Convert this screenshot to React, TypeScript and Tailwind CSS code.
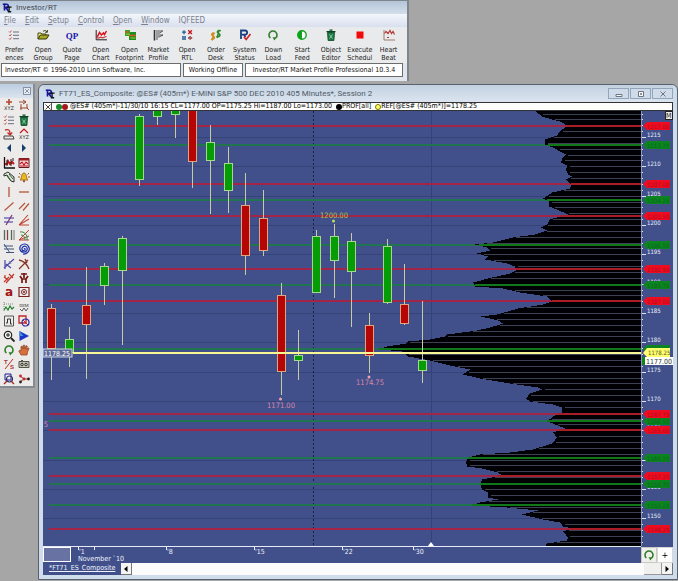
import { clsx } from 'clsx'
import type { ReactNode } from 'react'

const UI_FONT = "font-['DejaVu_Sans_Condensed','DejaVu_Sans','Noto_Sans',sans-serif]"
const TITLE_FONT = "font-['Roboto','Noto_Sans',sans-serif]"

const RED = '#c8141e'
const NAVY = '#1c1c9c'

type Glyph = { name: string; art: ReactNode }

function GlyphSvg({ children, className }: { children: ReactNode; className?: string }) {
  return (
    <svg viewBox="0 0 12 12" fill="none" aria-hidden className={clsx('size-3 flex-none', className)}>
      {children}
    </svg>
  )
}

function Logo() {
  return (
    <svg viewBox="0 0 12 12" fill="none" aria-hidden className="size-[10px] flex-none">
      <path d="M1 1.5h4.5a2 2 0 0 1 0 4H2.5" stroke="#15159c" strokeWidth="2" />
      <path d="M3 1v8M4.5 5l3 4.5" stroke="#15159c" strokeWidth="2" />
      <path d="M5 5h6.5M8.5 4v7M7 10.5h4" stroke="#101018" strokeWidth="1.6" />
    </svg>
  )
}

const refreshArt = (
  <>
    <path d="M3.4 9A4 4 0 1 1 8.6 9" stroke="#2f7d2a" strokeWidth="1.6" />
    <path d="M5.5 8.2h4.2L7.4 11.6z" fill="#2f7d2a" />
  </>
)

const trashArt = (
  <>
    <path d="M2.5 3.5h7l-.6 8H3.1z" fill="#1d7a45" stroke="#0c4526" strokeWidth=".8" />
    <path d="M1.5 2.6h9M4.5 1.2h3" stroke="#0c4526" strokeWidth="1.3" />
    <path d="M4.5 5.5l3 4M7.5 5.5l-3 4" stroke="#a6dcba" strokeWidth=".8" />
  </>
)

const listArt = (
  <>
    <path d="M1 2.5l1 1 1.5-2M1 6l1 1 1.5-2M1 9.5l1 1 1.5-2" stroke="#c04a4a" strokeWidth=".9" />
    <path d="M5 3h6M5 6.3h6M5 9.7h6" stroke="#6e6e86" />
  </>
)

const TOOLBAR: { lines: [string, string]; art: ReactNode }[] = [
  { lines: ['Prefer', 'ences'], art: listArt },
  {
    lines: ['Open', 'Group'],
    art: (
      <>
        <path d="M1 10V4h3l1 1h4v2" stroke="#4b4b10" fill="#f1ef8a" />
        <path d="M1 10l2.4-4H12l-2.6 4z" fill="#a9ab25" stroke="#35350a" />
        <path d="M6 2.4c1.5-1.4 3-1 4 .6M10.4 1v2.3H8.2" stroke="#35350a" strokeWidth=".9" />
      </>
    ),
  },
  {
    lines: ['Quote', 'Page'],
    art: (
      <text x="6" y="10" textAnchor="middle" fontSize="9" fontWeight="700" fill="#1616a8" fontFamily="Liberation Serif, serif">
        QP
      </text>
    ),
  },
  {
    lines: ['Open', 'Chart'],
    art: (
      <>
        <path d="M1.2 1v9.8H12" stroke="#222" />
        <path d="M2 8.500l2.500-5 2 2.500 2-2 1 1.500L11.500 2" stroke="#e0101c" strokeWidth="1.500" />
        <path d="M2.500 9.500l3-1.400 2 .8L11.500 7.500" stroke="#d03840" strokeWidth="1.300" />
      </>
    ),
  },
  {
    lines: ['Open', 'Footprint'],
    art: (
      <>
        <path d="M1 1h5v6H1z" fill="#27a52c" />
        <path d="M6 3h6v8H5V6h1z" fill="#1f8c24" />
        <path d="M1 3h4M5 6.500h7" stroke="#cf5b1c" strokeWidth="1.500" />
        <path d="M2 5.200h4M6.500 9h5" stroke="#b0c82a" />
      </>
    ),
  },
  {
    lines: ['Market', 'Profile'],
    art: (
      <>
        <path d="M2.500 1v10.500" stroke="#333" strokeWidth="1.600" />
        <path d="M4 2h7M4 4h4M4 6h7M4 8h3M4 10h2" stroke="#555" strokeWidth="1.100" />
        <path d="M8 4l2.500-2M7 8l4-2" stroke="#333" strokeWidth=".8" />
      </>
    ),
  },
  {
    lines: ['Open', 'RTL'],
    art: (
      <>
        <path d="M1 3.200h4M3 1.200v4M1 8h4M1 10h4" stroke="#1f5f96" strokeWidth="1.300" />
        <path d="M7.300 1.300l3.600 3.600M10.900 1.300L7.300 4.900" stroke={RED} strokeWidth="1.400" />
        <path d="M7 9h4.200M9.100 7v.9M9.100 10.200v.9" stroke="#8c3030" strokeWidth="1.300" />
      </>
    ),
  },
  {
    lines: ['Order', 'Desk'],
    art: (
      <>
        <path d="M5 4.500C2 3 .5 6 3 7s1.600 4-2 3M3.500 3.500l-1.200 8" stroke="#d38a1c" strokeWidth="1.500" />
        <path d="M10.800 1.800C8 .6 6 3 8.500 4.400s1.600 4-2.200 3M9 .8L7.200 9" stroke="#2d8a2e" strokeWidth="1.500" />
      </>
    ),
  },
  {
    lines: ['System', 'Status'],
    art: (
      <>
        <path d="M2 10V1.500h4a2 2 0 0 1 0 4.200H3M5 6l1.500 2" stroke="#173c80" strokeWidth="1.800" />
        <path d="M5 8l2.200 2.500L11.500 5" stroke="#d3202a" strokeWidth="1.700" />
      </>
    ),
  },
  { lines: ['Down', 'Load'], art: refreshArt },
  {
    lines: ['Start', 'Feed'],
    art: (
      <>
        <circle cx="6" cy="6" r="4.200" fill="#fff" stroke="#0fa31d" strokeWidth="1.400" />
        <path d="M6 1.500a4.500 4.500 0 0 0 0 9z" fill="#0fa31d" />
      </>
    ),
  },
  { lines: ['Object', 'Editor'], art: trashArt },
  { lines: ['Execute', 'Schedul'], art: <path d="M2.500 2.500h7v7h-7z" fill="#f00a0a" /> },
  {
    lines: ['Heart', 'Beat'],
    art: (
      <>
        <path d="M1 1v10h11" stroke="#99806a" />
        <path d="M1.500 4.500l1.500-2 2 2 2-3 1.500 3 1.500-2 1.500 3" stroke="#b33a36" strokeWidth="1.200" />
        <path d="M4 8.500h2" stroke="#b33a36" />
      </>
    ),
  },
]

const xyz = (y: number) => (
  <text x="6" y={y} textAnchor="middle" fontSize="5" fill="#333" fontFamily="DejaVu Sans, sans-serif">
    XYZ
  </text>
)

const TOOLS: Glyph[] = [
  { name: 'Add label', art: <><path d="M6 0v6M3 3h6" stroke="#b5482c" strokeWidth="1.600" />{xyz(11)}</> },
  { name: 'Edit line', art: <path d="M1 3h7M5 1l3 2-3 2M2 9h8M3 5v6M9 5v4l2 2" stroke="#9c4634" /> },
  { name: 'List', art: listArt },
  { name: 'Delete', art: trashArt },
  { name: 'Drop', art: <><path d="M1 8h9l1 3H1z" fill="#e8e8e8" stroke="#4a3f3f" /><path d="M2 2c4-1 5 0 5 4M4.500 4.500L7 7l2.200-2.500" stroke="#c12e28" strokeWidth="1.300" /></> },
  { name: 'Text up', art: <><path d="M2 5l4-4 4 4" stroke={RED} strokeWidth="1.200" />{xyz(11)}</> },
  { name: 'Previous', art: <path d="M8 2v8L4 6z" fill="#173d6b" /> },
  { name: 'Next', art: <path d="M4 2v8l4-4z" fill="#173d6b" /> },
  { name: 'Bars', art: <><path d="M1.500 0v11M1 11h11" stroke="#111" strokeWidth="1.300" /><path d="M2 7h2l1-3 2 3 2-2 2 2" stroke="#c01818" strokeWidth="2" /><path d="M4 3v6M8 2v7M10 1v3" stroke="#222" /></> },
  { name: 'Chart window', art: <><path d="M1 1.500h10v9H1z" fill="#f4d6d6" stroke="#5e1c22" /><path d="M1 2.500h10" stroke="#a11b22" strokeWidth="2" /><path d="M2 7l2-2 2 3 2-3 2 2M2 9h8" stroke={RED} strokeWidth="1.100" /></> },
  { name: 'Pointer', art: <><path d="M1 3l4-2 6 5v5l-3-1-4-6-3 1z" fill="#e7e7d8" stroke="#2d2d2d" /><path d="M4 5l4 5M6 3l4 5" stroke="#246434" /></> },
  { name: 'Alert', art: <><path d="M2 9c2-1 1-7 4-7s2 6 4 7z" fill="#efb821" stroke="#8a6210" strokeWidth=".8" /><circle cx="6" cy="10.300" r="1" fill="#8a3210" /><path d="M1 2l1.500 1.500M11 2L9.500 3.500M0 6h2M10 6h2" stroke="#a35b17" /></> },
  { name: 'Vertical line', art: <path d="M6 1v10" stroke="#b4553a" strokeWidth="1.300" /> },
  { name: 'Horizontal line', art: <path d="M1 6h10" stroke="#b4553a" strokeWidth="1.300" /> },
  { name: 'Trend line', art: <path d="M1.500 10.500l9-8" stroke="#b4553a" strokeWidth="1.200" /> },
  { name: 'Channel', art: <path d="M1 9l6-6M5 10.500l6-7" stroke="#b4553a" strokeWidth="1.200" /> },
  { name: 'Crossed lines', art: <><path d="M1 4h10M1 8h9" stroke="#34349c" strokeWidth="1.100" /><path d="M3 11l6-10" stroke="#7c2c7c" strokeWidth="1.200" /></> },
  { name: 'Fan', art: <path d="M1 11L10 1M1 11l10-6M1 11h10" stroke="#c04432" strokeWidth="1.100" /> },
  { name: 'Vertical bands', art: <><path d="M1.500 1v10M8.500 1v10" stroke="#4a6c5a" strokeWidth="1.300" /><path d="M4.500 1v10" stroke="#8c3a4a" strokeWidth="1.300" /><path d="M11 1v10" stroke="#777" /></> },
  { name: 'Arc fan', art: <><path d="M1 11L11 1M1 11l10-4M1 11h10" stroke="#c04432" /><path d="M2 3c4-1 8 3 7 8M3 6c3 0 4 2 4 5" stroke="#3d8a44" /></> },
  { name: 'Retracement', art: <><path d="M1 3h9M1 6h10M3 9.500h8" stroke="#44506e" strokeWidth="1.100" /><path d="M1 1l6 9" stroke="#2a5e98" /></> },
  { name: 'Spiral', art: <path d="M6 6c1-1.500 2 .8 0 1.500S3 5.500 5 3.800s5 .2 4 3.200-6 3-7-.5S4 .8 7 1s5 4 4 6.500S7 11.500 5 11" stroke="#1b2fa8" strokeWidth="1.200" /> },
  { name: 'Regression', art: <><path d="M2 2v9M3 6l5 4M1 10L11 1" stroke="#4848a8" strokeWidth="1.200" /><path d="M6 3l2 3" stroke="#8080b8" /></> },
  { name: 'Cross', art: <path d="M1 2c5 1 8 4 10 9M1 11l9-9M7 1l2 4" stroke="#883526" strokeWidth="1.300" /> },
  { name: 'Pitchfork', art: <path d="M1 10l5-5M3 11l8-9M1 5l4 3M6 2l4 4M2 3v3" stroke="#c2382c" strokeWidth="1.200" /> },
  { name: 'Figure', art: <path d="M3 2h6M6 1v5M2 4l2 3v4M10 4L8 7v4M4 7h4" stroke="#761515" strokeWidth="1.700" /> },
  { name: 'Text', art: <text x="6" y="10" textAnchor="middle" fontSize="12" fontWeight="700" fill="#a31414" fontFamily="DejaVu Sans, sans-serif">a</text> },
  { name: 'Target', art: <><path d="M1 1.500h10v9H1z" stroke="#7b2020" strokeWidth="1.200" /><circle cx="6" cy="6" r="2.500" stroke="#7b2020" /><circle cx="6" cy="6" r="1" fill="#7b2020" /></> },
  { name: 'Indicator', art: <><path d="M1 1v10M1 3h10" stroke="#7d8d7d" strokeDasharray="1 1" /><path d="M1 9l2-3 2 3 2-4 2 3 2-2" stroke="#258134" strokeWidth="1.200" /></> },
  { name: 'Symbol', art: <><text x="6" y="6" textAnchor="middle" fontSize="5" fill="#333" fontFamily="Liberation Serif, serif">IBM</text><path d="M2 8l2 2 2-3 2 3 2-3" stroke="#5a5a66" /></> },
  { name: 'Step', art: <><path d="M1.500 1h9v10h-9z" stroke="#555" /><path d="M3 8h1.500V4h3v5H9" stroke="#333" /></> },
  { name: 'Shapes', art: <><path d="M1 1h7v7H1z" stroke="#c02828" strokeWidth="1.300" /><circle cx="7.500" cy="7.500" r="3.500" stroke="#2828a8" strokeWidth="1.200" /><path d="M5 5l5 5" stroke="#c02828" /></> },
  { name: 'Zoom in', art: <><circle cx="5" cy="5" r="3.700" fill="#f3f7f7" stroke="#222" strokeWidth="1.200" /><path d="M8 8l3.500 3.500" stroke="#222" strokeWidth="1.900" /><path d="M3 5h4M5 3v4" stroke="#222" /></> },
  { name: 'Play', art: <><path d="M1.500 1v10L11 6z" fill="#1c35c4" /><path d="M1.500 1v5h4z" fill="#3f8edc" /></> },
  { name: 'Refresh', art: refreshArt },
  { name: 'Hand', art: <path d="M3 11L.8 7l1-.8L3 7V2.500l1.200-.3L5 5l.3-3.800h1.300L7 5l1-3.300 1.200.3L8.900 5.500l1.300-1.700.9.700L9.500 8 9 11z" fill="#d8703a" stroke="#8a3a18" strokeWidth=".7" /> },
  { name: 'Fraction', art: <><path d="M2 11L10 1" stroke="#c02828" /><text x="1" y="6" fontSize="6" fontWeight="700" fill="#a33232" fontFamily="Liberation Sans, sans-serif">T</text><text x="7" y="11" fontSize="6" fontWeight="700" fill="#a33232" fontFamily="Liberation Sans, sans-serif">S</text></> },
  { name: 'Camera', art: <><path d="M1 3.500h10v6H1z" fill="#c9c9b8" stroke="#55554c" /><path d="M3 2.500h2" stroke="#55554c" /><circle cx="4" cy="6.500" r="1.300" stroke="#333" /><circle cx="8" cy="6.500" r="1.300" stroke="#333" /></> },
  { name: 'Find', art: <><path d="M2 1h6v6H2z" stroke={NAVY} /><circle cx="6.500" cy="6" r="3" stroke="#27336a" strokeWidth="1.200" /><path d="M1 11l3-3M8 8l3 3" stroke="#a02828" strokeWidth="1.400" /></> },
  { name: 'Nodes', art: <><path d="M2 3l4 3-4 3M6 6h4" stroke="#a52727" /><circle cx="2.500" cy="3" r="1.400" fill="#c02828" /><circle cx="2.500" cy="9" r="1.400" fill="#222" /><circle cx="6" cy="6" r="1.400" fill="#c02828" /><circle cx="10.500" cy="6" r="1.400" fill="#222" /></> },
]

// --- chart data -------------------------------------------------------------

const AXIS_X = 641
const priceY = (price: number) => 137 + (1215 - price) * 5.866
const priceAt = (y: number) => Math.round((1215 - (y - 137) / 5.866) * 4) / 4

const RED_LEVELS = [126, 184, 216, 269, 301, 414, 430, 476, 529]
const GREEN_LEVELS = [145, 200, 245, 285, 349, 421, 458, 484, 505]
const AXIS_LABELS = [1215, 1210, 1205, 1200, 1195, 1190, 1185, 1180, 1175, 1170, 1165, 1155, 1150]

// x, high, body top, body bottom, low, rising
type Candle = [number, number, number, number, number, boolean]
const CANDLES: Candle[] = [
  [51, 304, 308, 348, 380, false],
  [69, 327, 339, 352, 367, true],
  [86, 267, 305, 324, 379, false],
  [104, 263, 266, 285, 305, true],
  [122, 236, 238, 270, 345, true],
  [139, 114, 116, 179, 186, true],
  [157, 100, 100, 116, 125, true],
  [175, 100, 100, 114, 138, true],
  [192, 100, 100, 161, 188, false],
  [210, 125, 142, 160, 214, true],
  [228, 147, 163, 190, 213, true],
  [245, 173, 205, 255, 275, false],
  [263, 190, 218, 250, 256, false],
  [281, 283, 295, 371, 395, false],
  [298, 330, 355, 360, 380, true],
  [316, 230, 236, 292, 292, true],
  [334, 224, 236, 260, 298, true],
  [351, 233, 241, 271, 327, true],
  [369, 313, 325, 355, 373, false],
  [387, 239, 246, 302, 304, true],
  [404, 264, 304, 323, 325, false],
  [422, 301, 360, 370, 383, true],
]

// left edge of the volume profile, as [x, y]
const PROFILE: [number, number][] = [
  [536, 111], [542, 116], [552, 119], [560, 121], [567, 125], [567, 126], [562, 129], [559, 132],
  [557, 135], [545, 139], [545, 144], [553, 147], [560, 151], [566, 154], [562, 158], [561, 162],
  [567, 165], [566, 169], [568, 174], [572, 176], [566, 179], [571, 184], [570, 188], [552, 192],
  [543, 198], [549, 201], [549, 206], [557, 209], [568, 214], [560, 216], [550, 219], [547, 224],
  [541, 227], [547, 230], [535, 234], [513, 237], [505, 239], [493, 242], [475, 244], [487, 247],
  [490, 250], [477, 253], [488, 256], [485, 259], [507, 263], [515, 266], [516, 270], [510, 273],
  [488, 278], [473, 282], [475, 286], [503, 288], [520, 292], [547, 296], [552, 301], [543, 304],
  [518, 308], [497, 314], [481, 316], [498, 320], [503, 323], [490, 327], [477, 330], [447, 334],
  [445, 336], [430, 339], [408, 341], [406, 343], [387, 346], [379, 349], [402, 351], [408, 356],
  [430, 360], [450, 365], [470, 369], [463, 374], [480, 378], [510, 383], [538, 387], [542, 389],
  [530, 393], [526, 398], [530, 401], [553, 404], [562, 407], [562, 412], [553, 416], [547, 421],
  [558, 425], [565, 428], [553, 432], [557, 437], [552, 443], [533, 449], [510, 452], [480, 454],
  [468, 457], [466, 462], [467, 466], [482, 468], [498, 472], [502, 475], [482, 479], [480, 483],
  [482, 489], [488, 492], [488, 497], [498, 499], [480, 502], [472, 505], [507, 507], [538, 510],
  [522, 514], [543, 519], [560, 522], [563, 526], [572, 528], [563, 531], [568, 537], [567, 540],
  [547, 543], [545, 546],
]

function edgeAt(y: number) {
  const i = PROFILE.findIndex((p) => p[1] > y)
  if (i < 1) return i === 0 ? PROFILE[0][0] : PROFILE[PROFILE.length - 1][0]
  const [x0, y0] = PROFILE[i - 1]
  const [x1, y1] = PROFILE[i]
  return Math.round(x0 + ((x1 - x0) * (y - y0)) / (y1 - y0))
}

const ROWS = Array.from({ length: 435 }, (_, i) => 111 + i)
const PROFILE_PATH = `M${AXIS_X} 111${ROWS.map((y) => `H${edgeAt(y)}V${y + 1}`).join('')}H${AXIS_X}Z`
const POINTS = Array.from({ length: 75 }, (_, i) => 1219 - i).filter((p) => priceY(p) < 546)

function LevelTag({ y, color, ink }: { y: number; color: string; ink: string }) {
  return (
    <g>
      <path d={`M643 ${y}l4-4h23v8h-23z`} fill={color} />
      {/* the reference price's own tag covers this one's text */}
      {y !== 349 && (
        <text x="647" y={y + 3} fontSize="6" fill={ink}>
          {priceAt(y).toFixed(2)}
        </text>
      )}
    </g>
  )
}

function PricePlot() {
  return (
    <svg
      viewBox="43 111 630 436"
      role="img"
      aria-label="E-MINI S&P 500 candlestick chart"
      className={clsx('block h-auto w-full bg-[#41508b]', UI_FONT)}
    >
      {POINTS.filter((p) => p % 5 === 0).map((p) => (
        <rect key={p} x="43" y={Math.round(priceY(p))} width="598" height="1" fill="#364379" />
      ))}
      <rect x="431" y="111" width="1" height="435" fill="#35427a" />
      <path d="M313.500 111v435" stroke="#1a2040" strokeDasharray="2 2" />
      {RED_LEVELS.map((y) => (
        <rect key={y} x="49" y={y - 1} width="592" height="2" fill="#a22547" />
      ))}
      {GREEN_LEVELS.map((y) => (
        <rect key={y} x="49" y={y - 1} width="592" height="2" fill="#20744f" />
      ))}

      <path d={PROFILE_PATH} fill="#000005" />
      {POINTS.map((p) => {
        const y = Math.round(priceY(p))
        const x = edgeAt(y) + 3
        return <rect key={p} x={x} y={y} width={AXIS_X - x} height="1" fill="#3c4254" />
      })}
      {RED_LEVELS.map((y) => (
        <rect key={y} x={edgeAt(y)} y={y - 1} width={AXIS_X - edgeAt(y)} height="2" fill="#ab1c26" />
      ))}
      {GREEN_LEVELS.map((y) => (
        <rect key={y} x={edgeAt(y)} y={y - 1} width={AXIS_X - edgeAt(y)} height="2" fill="#107818" />
      ))}

      {CANDLES.map(([x, high, top, bottom, low, rising]) => (
        <g key={x}>
          <rect x={x} y={high} width="1" height={low - high} fill="#c6cba4" />
          <rect
            x={x - 3.5}
            y={top + 0.5}
            width="8"
            height={bottom - top}
            fill={rising ? '#069c06' : '#b50505'}
            stroke={rising ? '#a6d78c' : '#dfa57e'}
          />
        </g>
      ))}

      <rect x="73" y="352" width="568" height="2" fill="#f7f795" />

      <g fontSize="7.500" textAnchor="middle">
        <text x="334" y="218" fill="#b9c23e">1200.00</text>
        <text x="281" y="408" fill="#dd86a8">1171.00</text>
        <text x="370" y="385" fill="#dd86a8">1174.75</text>
        <text x="46" y="427" fill="#dd86a8">5</text>
      </g>
      <circle cx="333.500" cy="221" r="1.500" fill="#b7e05a" />
      <circle cx="280.500" cy="399" r="1.500" fill="#f0a0b4" />
      <circle cx="369" cy="377" r="1.500" fill="#f0a0b4" />

      <rect x="43" y="349" width="29" height="8" fill="#5d6a98" stroke="#cfd6e6" />
      <text x="44" y="356" fontSize="7" fill="#fff">1178.25</text>

      <rect x="641" y="111" width="32" height="436" fill="#41508b" />
      <rect x="641" y="111" width="1" height="435" fill="#8d97bb" />
      {POINTS.map((p) => (
        <rect key={p} x="642" y={Math.round(priceY(p))} width={p % 5 === 0 ? 4 : 1} height="1" fill="#dfe4f2" />
      ))}
      <g fontSize="6" fill="#eef1fa">
        {AXIS_LABELS.map((p) => (
          <text key={p} x="647" y={Math.round(priceY(p))}>
            {p}
          </text>
        ))}
      </g>
      {GREEN_LEVELS.map((y) => (
        <LevelTag key={y} y={y} color="#0c8420" ink="#07691a" />
      ))}
      {RED_LEVELS.map((y) => (
        <LevelTag key={y} y={y} color="#ee0d20" ink="#b00a1c" />
      ))}
      <path d="M643 353l4-5h23v9h-23z" fill="#ffff6e" />
      <text x="648" y="355" fontSize="6" fill="#555520">1178.25</text>
      <rect x="642" y="357" width="4" height="8" fill="#0c8420" />
      <rect x="645" y="357" width="28" height="8" fill="#fff" />
      <text x="646" y="364" fontSize="7" fill="#333">1177.00</text>
      <rect x="665.500" y="111.500" width="7" height="8" fill="#e8e8e8" stroke="#222" />
      <text x="666" y="118" fontSize="7" fill="#222">M</text>

      <path d="M428 546l3-4 3 4z" fill="#fff" />
      <rect x="43" y="546" width="598" height="1" fill="#e6eaf5" />
    </svg>
  )
}

const DAYS = [
  { x: 79, label: "'1" },
  { x: 95, label: '' },
  { x: 167, label: "'8" },
  { x: 255, label: "'15" },
  { x: 343, label: "'22" },
  { x: 414, label: "'30" },
]

function DateAxis() {
  return (
    <div className="flex bg-[#41508b]">
      <div className="h-[15px] w-7 flex-none border border-white bg-[#6873a3]" />
      <svg viewBox="71 547 570 16" className={clsx('min-w-0 flex-1', UI_FONT)} fontSize="7" fill="#eef1fa" role="img" aria-label="November '10">
        {DAYS.map(({ x, label }) => (
          <g key={x}>
            <rect x={x - 1} y="547" width="1" height="3" />
            <text x={x} y="554">{label}</text>
          </g>
        ))}
        <text x="78" y="561">November `10</text>
      </svg>
      <button type="button" aria-label="Refresh chart" className="flex h-4 w-4 flex-none items-center justify-center border border-[#c9c9c4] bg-[#f0f0ea]">
        <GlyphSvg>{refreshArt}</GlyphSvg>
      </button>
      <button type="button" className="h-4 w-4 flex-none border border-[#d7d7d7] bg-white text-[9px] leading-3 text-black">
        +
      </button>
    </div>
  )
}

function ScrollButton({ label, d }: { label: string; d: string }) {
  return (
    <button type="button" aria-label={label} className="flex w-[11px] flex-none items-center justify-center border-r border-b border-[#777] bg-[#f4f4f2]">
      <svg viewBox="0 0 6 6" className="size-1.5" aria-hidden>
        <path d={d} fill="#000" />
      </svg>
    </button>
  )
}

function WindowButton({ label, d }: { label: string; d: string }) {
  return (
    <button type="button" aria-label={label} className="flex h-[11px] w-[21px] items-center justify-center border border-[#93a5bb] bg-[#cfdbe9]">
      <svg viewBox="0 0 8 8" className="size-2" fill="#f4f6f8" stroke="#6d7681" aria-hidden>
        <path d={d} />
      </svg>
    </button>
  )
}

function ChartWindow() {
  return (
    <main className="flex min-w-0 flex-1 flex-col rounded-t-md border border-[#59626c] bg-[#cfdceb] px-1 pb-1">
      <header className="flex h-[17px] items-center gap-1 bg-linear-to-b from-[#c3d1e1] to-[#dbe5f0] pl-0.5">
        <Logo />
        <h1 className={clsx('min-w-0 flex-1 truncate text-[8px] leading-3 text-[#4f5a66]', TITLE_FONT)}>
          FT71_ES_Composite: @ES# (405m*) E-MINI S&amp;P 500 DEC 2010 405 Minutes*, Session 2
        </h1>
        <div className="flex gap-px">
          <WindowButton label="Minimize" d="M1 4.500h6v2H1z" />
          <WindowButton label="Maximize" d="M1.500 1.500h5v5h-5zM3.500 3.500h1v1h-1z" />
          <WindowButton label="Close" d="M1.500 1.500l5 5M6.500 1.500l-5 5" />
        </div>
      </header>
      <div className="flex h-[9px] items-center border border-[#333] bg-[#fdfdfb] text-[7px] leading-[7px] whitespace-nowrap text-black">
        <button type="button" aria-label="Remove" className="mr-1 flex h-[7px] w-2 items-center justify-center border-r border-[#555]">
          <svg viewBox="0 0 6 6" className="size-1.5" stroke="#444" aria-hidden><path d="M.5.500l5 5M5.500.500l-5 5" /></svg>
        </button>
        <span className="size-[6px] rounded-full bg-[#18882a]" />
        <span className="mr-0.5 size-[6px] rounded-full bg-[#a51820]" />
        <span>@ES# (405m*)-11/30/10 16:15 CL=1177.00 OP=1175.25 Hi=1187.00 Lo=1173.00</span>
        <span className="ml-1 size-[6px] rounded-full bg-black" />
        <span>PROF[all]</span>
        <span className="ml-1 size-[6px] rounded-full border border-[#77770a] bg-[#ffff60]" />
        <span>REF[@ES# (405m*)]=1178.25</span>
      </div>
      <PricePlot />
      <DateAxis />
      <nav className="flex h-3 bg-[#fbfbfb]">
        <a href="#composite" className="w-[78px] flex-none bg-[#41508b] pl-1.5 text-[7px] leading-[11px] whitespace-nowrap text-[#f0f3fb] underline">
          *FT71_ES_Composite
        </a>
        <ScrollButton label="Scroll left" d="M4.500 0v6L1 3z" />
        <span className="flex-1" />
        <span className="w-[18px] border-r border-b border-[#999] bg-[#f0f0ee]" />
        <ScrollButton label="Scroll right" d="M1.500 0v6L5 3z" />
      </nav>
    </main>
  )
}

function Palette() {
  return (
    <aside className="w-[35px] flex-none self-start border-r-2 border-b-2 border-[#858b92] bg-[#ecebe9]">
      <div className="flex h-[14px] items-center justify-end bg-linear-to-b from-[#bccde0] to-[#dbe4ee] pr-0.5">
        <button type="button" aria-label="Close palette" className="flex size-2 items-center justify-center border border-[#8793a3] bg-[#e4eaf2]">
          <svg viewBox="0 0 6 6" className="size-1" stroke="#5c6878" aria-hidden><path d="M0 0l6 6M6 0L0 6" /></svg>
        </button>
      </div>
      <div className="grid h-[288px] auto-rows-fr grid-cols-2 px-0.5">
        {TOOLS.map(({ name, art }) => (
          <button key={name} type="button" aria-label={name} className="flex min-h-0 items-center justify-center">
            <GlyphSvg>{art}</GlyphSvg>
          </button>
        ))}
      </div>
    </aside>
  )
}

function MainWindow() {
  return (
    <div className="w-[409px] max-w-full border-t border-r-2 border-[#7d848c] bg-[#e9eaec]">
      <header className="flex h-[13px] items-center gap-1 bg-linear-to-b from-[#b4c5d9] to-[#d3deea] pl-0.5 text-[8px] text-[#3f4853]">
        <Logo />
        <span className={TITLE_FONT}>Investor/RT</span>
      </header>
      <nav className="flex h-[13px] items-center gap-[9px] bg-linear-to-b from-[#f3f6fb] to-[#d9dfee] pl-1 text-[8px] text-[#7b818c]">
        {['File', 'Edit', 'Setup', 'Control', 'Open', 'Window'].map((item) => (
          <button key={item} type="button">
            <span className="underline">{item[0]}</span>
            {item.slice(1)}
          </button>
        ))}
        <button type="button">IQFEED</button>
      </nav>
      <div className="flex h-9 pr-1">
        {TOOLBAR.map(({ lines, art }) => (
          <button key={lines.join(' ')} type="button" className="flex min-w-0 flex-1 flex-col items-center gap-[5px] pt-0.5 text-[7px] leading-[8px] whitespace-nowrap text-[#1b1b1b]">
            <GlyphSvg className="overflow-visible">{art}</GlyphSvg>
            <span className="flex flex-col items-center">
              <span>{lines[0]}</span>
              <span>{lines[1]}</span>
            </span>
          </button>
        ))}
      </div>
      <footer className="flex gap-0.5 bg-[#e0e6ee] pr-1 pb-1 pl-px text-[7px] leading-3 whitespace-nowrap text-[#111]">
        <span className="flex-1 border border-[#6c6c6c] bg-white px-[3px]">Investor/RT © 1996-2010 Linn Software, Inc.</span>
        <span className="w-[60px] border border-[#6c6c6c] bg-white text-center">Working Offline</span>
        <span className="w-[158px] border border-[#6c6c6c] bg-white text-center">Investor/RT Market Profile Professional 10.3.4</span>
      </footer>
    </div>
  )
}

export default function App() {
  return (
    <div className={clsx('flex min-h-screen flex-col gap-[3px] bg-[#a6a6a6]', UI_FONT)}>
      <MainWindow />
      <div className="flex items-start gap-[3px]">
        <Palette />
        <ChartWindow />
      </div>
    </div>
  )
}
